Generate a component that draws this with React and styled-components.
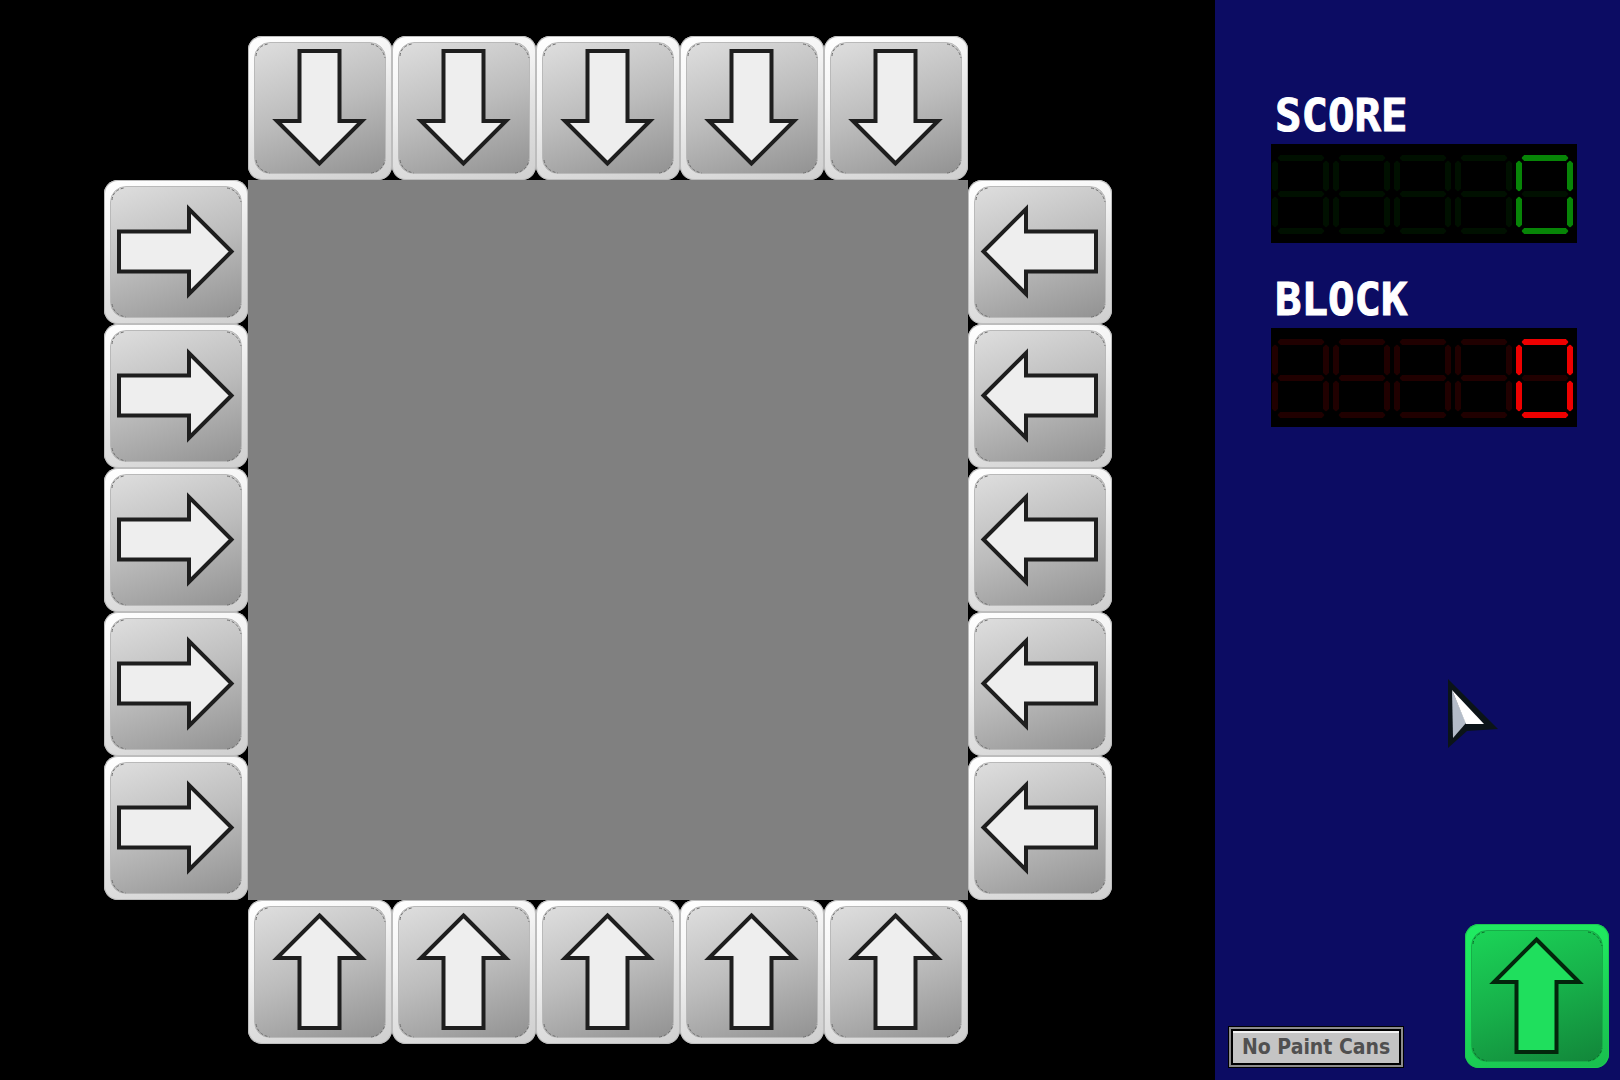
import { useState } from 'react';
import styled, { createGlobalStyle, css } from 'styled-components';

const GlobalStyle = createGlobalStyle`
  *, *::before, *::after { box-sizing: border-box; }
  body {
    margin: 0;
    background: #000;
    font-family: "DejaVu Sans", Verdana, sans-serif;
  }
`

const LANES = [1, 2, 3, 4, 5]
const TURN = { up: 0, right: 90, down: 180, left: 270 }

// segments a-g, each one a rounded bar
const H = (y) => `M7 ${y} l2 -2.5 h42 l2 2.5 l-2 2.5 h-42 z`
const V = (x, y) => `M${x} ${y} l2.5 2 v26 l-2.5 2 l-2.5 -2 v-26 z`
const SEGMENTS = {
  a: H(14),
  b: V(55, 17),
  c: V(55, 53),
  d: H(87),
  e: V(4, 53),
  f: V(4, 17),
  g: H(50),
}
const DIGITS = {
  0: 'abcdef', 1: 'bc', 2: 'abdeg', 3: 'abcdg', 4: 'bcfg',
  5: 'acdfg', 6: 'acdefg', 7: 'abc', 8: 'abcdefg', 9: 'abcdfg',
}

const ArrowTile = ({ direction, tone = 'silver', label, onClick }) => (
  <Tile type="button" aria-label={label} $tone={tone} onClick={onClick}>
    <TileArt viewBox="0 0 144 144" $tone={tone} aria-hidden="true">
      <g className="corners">
        <path d="M8 20 Q9 10 20 8" />
        <path d="M123 8 Q134 10 137 22" />
        <path d="M8 124 Q10 135 22 137" />
        <path d="M123 137 Q135 135 137 124" />
      </g>
      <path
        className="arrow"
        transform={`rotate(${TURN[direction]} 71.5 71.5)`}
        d="M71.5 15.5 L114 58 H91.5 V128 H51.5 V58 H29 Z"
      />
    </TileArt>
  </Tile>
)

const Led = ({ value, on, off }) => {
  const chars = String(value).padStart(5, ' ').split('')
  return (
    <LedPanel viewBox="0 0 306 99" role="img" aria-label={String(value)}>
      {chars.map((char, i) => (
        <g key={i} transform={`translate(${i * 61} 0)`}>
          {Object.keys(SEGMENTS).map((seg) => {
            const lit = (DIGITS[char] || '').includes(seg)
            return <path key={seg} d={SEGMENTS[seg]} fill={lit ? on : off} stroke={lit ? on : off} />
          })}
        </g>
      ))}
    </LedPanel>
  )
}

const App = () => {
  const [score] = useState(0)
  const [block] = useState(0)

  return (
    <Screen>
      <GlobalStyle />
      <BoardArea>
        <Board>
          <Row $at="top">
            {LANES.map((n) => <ArrowTile key={n} direction="down" label={`Column ${n} down`} />)}
          </Row>
          <Column $at="left">
            {LANES.map((n) => <ArrowTile key={n} direction="right" label={`Row ${n} right`} />)}
          </Column>
          <Field />
          <Column $at="right">
            {LANES.map((n) => <ArrowTile key={n} direction="left" label={`Row ${n} left`} />)}
          </Column>
          <Row $at="bottom">
            {LANES.map((n) => <ArrowTile key={n} direction="up" label={`Column ${n} up`} />)}
          </Row>
        </Board>
      </BoardArea>

      <Sidebar>
        <Counters>
          <Counter>
            <CounterName>SCORE</CounterName>
            <Led value={score} on="#078507" off="#001000" />
          </Counter>
          <Counter>
            <CounterName>BLOCK</CounterName>
            <Led value={block} on="#ee0000" off="#200000" />
          </Counter>
        </Counters>
        <Footer>
          <PaintButton type="button">No Paint Cans</PaintButton>
          <ArrowTile direction="up" tone="green" label="Next block" />
        </Footer>
        <Pointer viewBox="0 0 56 74" aria-hidden="true">
          <path d="M3 3 L53 53 L22 55 L3 72 Z" fill="#0b1418" />
          <path d="M7 14 L21 47 L8 62 Z" fill="#b3bcc8" />
          <path d="M7 14 L39 48 H21 Z" fill="#fff" />
        </Pointer>
      </Sidebar>
    </Screen>
  )
}

export default App

const Screen = styled.div`
  display: flex;
  min-height: 100vh;
`

const BoardArea = styled.main`
  flex: 1;
  display: flex;
  align-items: center;
  justify-content: center;
  padding-left: 1px;
  background: #000;
`

const Board = styled.div`
  display: grid;
  grid-template-columns: 144px 720px 144px;
  grid-template-areas:
    ". top ."
    "left field right"
    ". bottom .";
`

const Row = styled.div`
  grid-area: ${(p) => p.$at};
  display: flex;
`

const Column = styled.div`
  grid-area: ${(p) => p.$at};
  display: flex;
  flex-direction: column;
`

const Field = styled.div`
  grid-area: field;
  background: #808080;
`

const silver = css`
  background: linear-gradient(160deg, #fff 0%, #f4f4f4 35%, #e2e2e2 60%, #cfcfcf 100%);
  box-shadow: inset 0 0 0 1px #bdbdbd;
  &::before {
    background: linear-gradient(160deg, #dedede 0%, #bcbcbc 50%, #929292 100%);
    border-color: #b9b9b9;
  }
`

const green = css`
  background: linear-gradient(160deg, #20ec62 0%, #1fe65e 35%, #1cd457 60%, #19be4e 100%);
  box-shadow: inset 0 0 0 1px #1bc852;
  &::before {
    background: linear-gradient(160deg, #1bd457 0%, #17b04a 50%, #12863a 100%);
    border-color: #17ae48;
  }
`

const Tile = styled.button`
  position: relative;
  flex: none;
  width: 144px;
  height: 144px;
  padding: 0;
  border: 0;
  border-radius: 14px;
  cursor: pointer;
  &::before {
    content: "";
    position: absolute;
    inset: 6px;
    border: 1px solid;
    border-radius: 16px;
  }
  ${(p) => (p.$tone === 'green' ? green : silver)}
`

const TileArt = styled.svg`
  position: relative;
  display: block;
  width: 144px;
  height: 144px;
  .arrow {
    fill: ${(p) => (p.$tone === 'green' ? '#1fdf5d' : '#eee')};
    stroke: ${(p) => (p.$tone === 'green' ? '#03260c' : '#1e1e1e')};
    stroke-width: 4;
  }
  .corners {
    fill: none;
    stroke: ${(p) => (p.$tone === 'green' ? '#0d6e2c' : '#707070')};
    stroke-width: 1;
    stroke-dasharray: 3 2;
  }
`

const Sidebar = styled.aside`
  position: relative;
  flex: 0 0 25%;
  display: flex;
  flex-direction: column;
  justify-content: space-between;
  background: #0c0c63;
`

const Counters = styled.div`
  display: flex;
  flex-direction: column;
  gap: 35px;
  padding: 94px 0 0 56px;
`

const Counter = styled.section`
  display: flex;
  flex-direction: column;
  align-items: flex-start;
  gap: 6px;
`

const CounterName = styled.h2`
  margin: 0;
  padding-left: 4px;
  color: #fff;
  font-family: "DejaVu Sans Mono", monospace;
  font-size: 44px;
  font-weight: 700;
  line-height: 44px;
  -webkit-text-stroke: 1px #fff;
`

const LedPanel = styled.svg`
  display: block;
  width: 306px;
  height: 99px;
  background: #000;
  path {
    stroke-width: 1;
    stroke-linejoin: round;
  }
`

const Footer = styled.footer`
  display: flex;
  align-items: flex-end;
  justify-content: space-between;
  padding: 0 11px 12px 13px;
`

const PaintButton = styled.button`
  height: 42px;
  padding: 0 13px;
  border: 1px solid #000;
  background: #c4c4c4;
  box-shadow:
    inset 0 0 0 2px #8c8c8c,
    inset 0 0 0 4px #000,
    inset 0 6px 0 #f2f2f2;
  color: #505050;
  font-family: "DejaVu Sans Condensed", "DejaVu Sans", sans-serif;
  font-size: 21px;
  font-weight: 700;
  font-stretch: condensed;
  line-height: 24px;
  white-space: nowrap;
`

const Pointer = styled.svg`
  position: absolute;
  top: 676px;
  right: 119px;
  width: 56px;
  height: 74px;
  pointer-events: none;
`
